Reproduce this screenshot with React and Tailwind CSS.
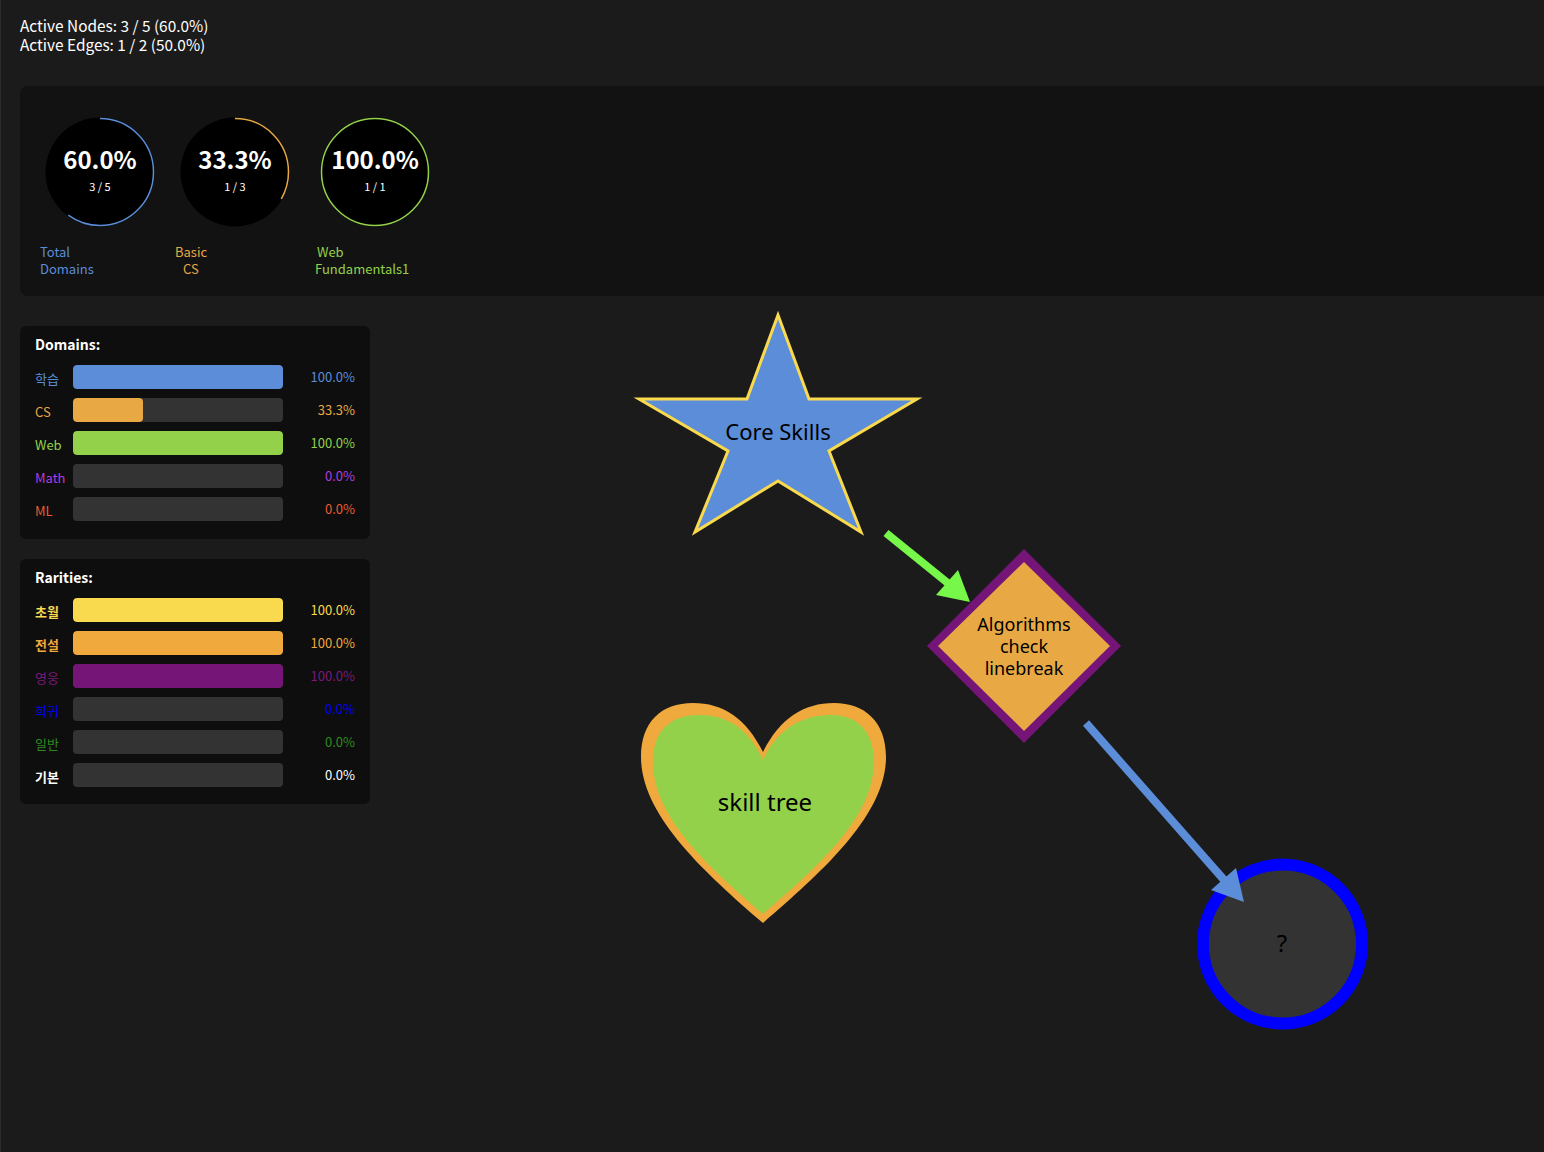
import React from "react";

const FONT = { fontFamily: '"Noto Sans CJK KR", "Noto Sans", sans-serif' };

const gauges = [
  { pct: 60, text: "60.0%", sub: "3 / 5", color: "#5b8dd9", lines: [["Total", "pl-0"], ["Domains", "pl-0"]], box: "ml-0" },
  { pct: 33.3, text: "33.3%", sub: "1 / 3", color: "#e8a945", lines: [["Basic", "pl-0"], ["CS", "pl-[8px]"]], box: "ml-[15px]" },
  { pct: 100, text: "100.0%", sub: "1 / 1", color: "#94d14a", lines: [["Web", "pl-[2px]"], ["Fundamentals1", "pl-0"]], box: "ml-[20px]" },
];

const domains = [
  { name: "학습", pct: 100, label: "100.0%", color: "#5b8dd9", bar: "#5b8dd9" },
  { name: "CS", pct: 33.3, label: "33.3%", color: "#e8a945", bar: "#e8a945" },
  { name: "Web", pct: 100, label: "100.0%", color: "#94d14a", bar: "#94d14a" },
  { name: "Math", pct: 0, label: "0.0%", color: "#b23be0", bar: "#b23be0" },
  { name: "ML", pct: 0, label: "0.0%", color: "#ec5a30", bar: "#ec5a30" },
];

const rarities = [
  { name: "초월", pct: 100, label: "100.0%", color: "#f9d94e", bar: "#f9d94e", bold: true },
  { name: "전설", pct: 100, label: "100.0%", color: "#f0a93c", bar: "#f0a93c", bold: true },
  { name: "영웅", pct: 100, label: "100.0%", color: "#7a1a7a", bar: "#761578" },
  { name: "희귀", pct: 0, label: "0.0%", color: "#0000ee", bar: "#0000ee" },
  { name: "일반", pct: 0, label: "0.0%", color: "#2f8a1e", bar: "#2f8a1e" },
  { name: "기본", pct: 0, label: "0.0%", color: "#ffffff", bar: "#ffffff", bold: true },
];

const Gauge = ({ g }) => {
  const r = 53.5;
  const c = 2 * Math.PI * r;
  return (
    <div className={`flex w-[120px] flex-col ${g.box}`}>
      <div className="relative mx-auto h-[110px] w-[110px]">
        <svg width="110" height="110" viewBox="0 0 110 110" className="absolute inset-0">
          <circle cx="55" cy="55" r="54.5" fill="#000" />
          <circle
            cx="55"
            cy="55"
            r={r}
            fill="none"
            stroke={g.color}
            strokeWidth="1.5"
            strokeDasharray={`${(c * g.pct) / 100} ${c}`}
            transform="rotate(-90 55 55)"
          />
        </svg>
        <div className="absolute inset-0 flex flex-col items-center justify-center text-white">
          <span className="mt-[-8px] text-[24px] font-bold leading-[30px]">{g.text}</span>
          <span className="mt-[5px] text-[11px] leading-[14px]">{g.sub}</span>
        </div>
      </div>
      <div className="mt-[16px] text-[13px] leading-[17px]" style={{ color: g.color }}>
        {g.lines.map(([t, pad]) => (
          <div key={t} className={pad}>{t}</div>
        ))}
      </div>
    </div>
  );
};

const BarPanel = ({ title, rows, className }) => (
  <div className={`w-[350px] rounded-[6px] bg-[#0e0e0e] px-[15px] ${className}`}>
    <div className="text-[14px] font-bold leading-[20px] text-white">{title}</div>
    <div className="mt-[11px] flex flex-col gap-[9px]">
      {rows.map((r) => (
        <div key={r.name} className="flex h-[24px] items-center">
          <span
            className={`w-[38px] pt-[4px] text-[13px] leading-[20px] ${r.bold ? "font-bold" : ""}`}
            style={{ color: r.color }}
          >
            {r.name}
          </span>
          <div className="h-[24px] w-[210px] overflow-hidden rounded-[4px] bg-[#333333]">
            <div className="h-full rounded-[4px]" style={{ width: `${r.pct}%`, background: r.bar }} />
          </div>
          <span className="flex-1 text-right text-[13px] leading-[20px]" style={{ color: r.color }}>
            {r.label}
          </span>
        </div>
      ))}
    </div>
  </div>
);

const Canvas = () => (
  <svg
    width="1544"
    height="1152"
    viewBox="0 0 1544 1152"
    className="pointer-events-none absolute left-0 top-0"
    style={{ fontFamily: '"Noto Sans", sans-serif' }}
  >
    {/* star */}
    <polygon
      points="777,315 808,399 916,399 828,451 860,532 777,481 694,532 727,451 638,399 746,399"
      fill="#5b8dd9"
      stroke="#f9d94e"
      strokeWidth="3"
      strokeLinejoin="miter"
    />
    <text x="777" y="440" textAnchor="middle" fontSize="22" fill="#000">Core Skills</text>

    {/* diamond */}
    <polygon points="1023,549 1120,646 1023,743 926,646" fill="#761578" />
    <polygon points="1023,562 1109,646 1023,731 937,646" fill="#e8a945" />
    <text textAnchor="middle" fontSize="18" fill="#000">
      <tspan x="1023" y="631">Algorithms</tspan>
      <tspan x="1023" y="653">check</tspan>
      <tspan x="1023" y="675">linebreak</tspan>
    </text>

    {/* heart */}
    <path
      d="M762 752 C745 718 722 703 692 703 C660 703 640 722 640 757 C640 815 703 872 762 923 C821 872 885 815 885 757 C885 722 864 703 833 703 C803 703 779 718 762 752 Z"
      fill="#f0a93c"
    />
    <path
      d="M762 760 C748 730 728 715 698 715 C668 715 652 732 652 762 C652 818 709 868 762 914 C815 868 873 818 873 762 C873 732 857 715 830 715 C800 715 776 730 762 760 Z"
      fill="#94d14a"
    />
    <text x="764" y="811" textAnchor="middle" fontSize="24" fill="#000">skill tree</text>

    {/* unknown node */}
    <circle cx="1281.5" cy="944" r="79.5" fill="#333333" stroke="#0000ff" strokeWidth="12" />
    <text x="1281" y="952" textAnchor="middle" fontSize="24" fill="#000">?</text>

    {/* edges */}
    <line x1="885" y1="533" x2="948" y2="584" stroke="#77f74a" strokeWidth="8" />
    <polygon points="969,602 935,595 957,570" fill="#77f74a" />
    <line x1="1085" y1="723" x2="1224" y2="881" stroke="#5b8dd9" strokeWidth="8" />
    <polygon points="1243,902 1210,890 1235,868" fill="#5b8dd9" />
  </svg>
);

const App = () => {
  return (
    <div
      className="relative h-[1152px] w-full overflow-hidden border-l border-[#2c2c2c] bg-[#1b1b1b] text-white"
      style={FONT}
    >
      <Canvas />
      <div className="relative flex flex-col pl-[19px] pt-[16px]">
        <div className="text-[15.4px] leading-[19px]">
          <div>Active Nodes: 3 / 5 (60.0%)</div>
          <div>Active Edges: 1 / 2 (50.0%)</div>
        </div>

        <div className="mt-[32px] flex h-[210px] w-[1600px] rounded-l-[8px] bg-[#121212] pl-[20px] pt-[31px]">
          {gauges.map((g) => (
            <Gauge key={g.text} g={g} />
          ))}
        </div>

        <BarPanel title="Domains:" rows={domains} className="mt-[30px] pt-[8px] pb-[18px]" />
        <BarPanel title="Rarities:" rows={rarities} className="mt-[20px] pt-[8px] pb-[17px]" />
      </div>
    </div>
  );
};

export default App;
